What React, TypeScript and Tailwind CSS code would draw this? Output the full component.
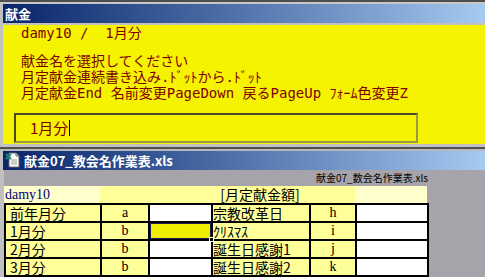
import React from "react";

const mono = { fontFamily: '"DejaVu Sans Mono","Noto Sans CJK JP",monospace' };
const goth = { fontFamily: '"Noto Sans CJK JP",sans-serif' };
const serif = { fontFamily: '"Liberation Serif","Noto Sans CJK JP",serif' };

function XlsIcon() {
  return (
    <svg width="16" height="16" viewBox="0 0 16 16">
      <path d="M4 1h7l3 3v11H4z" fill="#fff" stroke="#666" strokeWidth="1" />
      <path d="M11 1v3h3" fill="#ddd" stroke="#666" strokeWidth="1" />
      <path d="M6 8h6M6 10h6M6 12h6" stroke="#999" strokeWidth="1" />
      <path d="M1 2l5 5M6 2l-5 5" stroke="#1a8a6a" strokeWidth="2" />
      <path d="M2 4h3" stroke="#2a5aa8" strokeWidth="1" />
    </svg>
  );
}

type Row = { a: string; b: string; sel?: boolean; c: string; d: string };
const rows: Row[] = [
  { a: "前年月分", b: "a", c: "宗教改革日", d: "h" },
  { a: "1月分", b: "b", sel: true, c: "ｸﾘｽﾏｽ", d: "i" },
  { a: "2月分", b: "b", c: "誕生日感謝1", d: "j" },
  { a: "3月分", b: "b", c: "誕生日感謝2", d: "k" },
];

export default function App() {
  return (
    <div className="w-[485px] h-[277px] overflow-hidden bg-[#c0c0c0] flex flex-col">
      <div className="h-[2px] bg-[#4e4e4e]" />
      <div className="h-[2px] bg-[#c8c8c8]" />
      <div
        className="ml-[3px] h-[19px] bg-gradient-to-r from-[#0a246a] to-[#a6caf0] flex items-center pl-[2px] text-white font-bold text-[13px]"
        style={goth}
      >
        献金
      </div>
      <div className="h-[2px]" />
      <div className="ml-[3px] h-[121px] bg-[#f5f300] text-[#800000] text-[14px] leading-[16px] flex flex-col" style={mono}>
        <div className="pl-[18px] whitespace-pre">damy10 /  1月分</div>
        <div className="pl-[18px] mt-[12px] whitespace-pre">献金名を選択してください</div>
        <div className="pl-[18px] whitespace-pre">月定献金連続書き込み.ﾄﾞｯﾄから.ﾄﾞｯﾄ</div>
        <div className="pl-[18px] whitespace-pre">月定献金End 名前変更PageDown 戻るPageUp ﾌｫｰﾑ色変更Z</div>
        <div className="ml-[11px] mt-[12px] w-[404px] h-[30px] border-2 border-t-[#4a4a2a] border-l-[#4a4a2a] border-b-[#9a9a40] border-r-[#9a9a40] flex items-center pl-[14px] text-[15px]" style={goth}>
          <span>1月分</span>
          <span className="ml-[1px] w-[1px] h-[16px] bg-black" />
        </div>
      </div>
      <div className="h-[3px]" />
      <div className="h-[2px] bg-[#505050]" />
      <div className="h-[2px] bg-[#b8b8b8]" />
      <div
        className="ml-[3px] h-[19px] bg-gradient-to-r from-[#0a246a] to-[#a6caf0] flex items-center pl-[2px] gap-[3px] text-white font-bold text-[13px]"
        style={goth}
      >
        <XlsIcon />
        <span>献金07_教会名作業表.xls</span>
      </div>
      <div className="ml-[4px] flex-1 bg-[#a6a3aa] flex flex-col">
        <div className="w-[424px] h-[16px] text-right text-[10px] leading-[16px] text-black" style={goth}>
          献金07_数会名作業表.xls
        </div>
        <div className="w-[423px] h-[17px] grid grid-cols-[96px_48px_63px_98px_46px_72px] text-[14px] leading-[17px]" style={serif}>
          <div className="bg-[#ffffcc] text-[#000080] pl-[1px]">damy10</div>
          <div className="bg-[#ffff99]" />
          <div className="bg-[#ffff99]" />
          <div className="bg-[#ffff99] flex justify-center whitespace-nowrap" style={goth}>[月定献金額]</div>
          <div className="bg-[#ffff99]" />
          <div className="bg-[#ffffcc]" />
        </div>
        <div className="w-[425px] bg-black p-[2px] grid grid-cols-[94px_46px_61px_96px_44px_70px] auto-rows-[16px] gap-[2px] text-[14px] leading-[16px] text-black">
          {rows.map((r, i) => (
            <React.Fragment key={i}>
              <div className="bg-[#ffff99] pl-[4px] whitespace-nowrap" style={goth}>{r.a}</div>
              <div className="bg-[#ffff99] text-center" style={serif}>{r.b}</div>
              {r.sel ? (
                <div className="relative bg-[#f0ee00] border border-[#1c1c5c]">
                  <div className="absolute right-[-4px] bottom-[-4px] w-[5px] h-[5px] bg-black border border-white" />
                </div>
              ) : (
                <div className="bg-white" />
              )}
              <div className="bg-[#ffff99] whitespace-nowrap overflow-hidden" style={goth}>{r.c}</div>
              <div className="bg-[#ffff99] text-center" style={serif}>{r.d}</div>
              <div className="bg-white" />
            </React.Fragment>
          ))}
        </div>
      </div>
    </div>
  );
}
